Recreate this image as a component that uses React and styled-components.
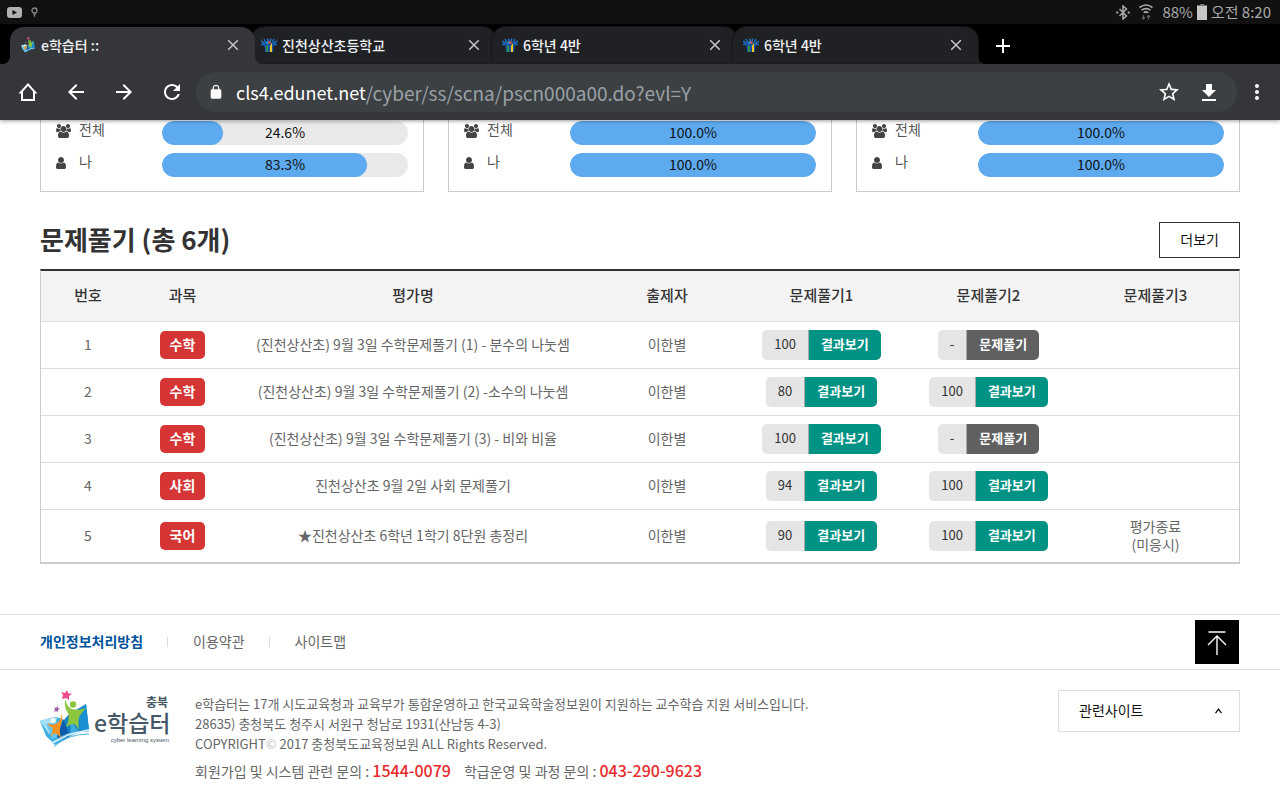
import React from "react";
import styled, { createGlobalStyle, css } from "styled-components";

const GlobalStyle = createGlobalStyle`
  *, *::before, *::after { box-sizing: border-box; }
  body {
    margin: 0;
    background: #fff;
    color: #666;
    font: 400 14px/20px "Noto Sans CJK KR", "Noto Sans", sans-serif;
  }
  button, input, select { font: inherit; color: inherit; margin: 0; padding: 0; border: 0; background: none; }
  button { cursor: pointer; }
  a { color: inherit; text-decoration: none; }
  h1, h2, p, ul { margin: 0; padding: 0; }
  ul { list-style: none; }
  svg { display: block; flex: none; }
`;

/* ---------- device and browser chrome ---------- */

const StatusBar = styled.div`
  display: flex;
  align-items: center;
  justify-content: space-between;
  height: 24px;
  padding: 0 9px 0 7px;
  background: #111;
  color: #aaa;
  font-size: 15px;
`;

const StatusGroup = styled.div`
  display: flex;
  align-items: center;
  gap: ${(p) => p.$gap}px;
`;

const TabStrip = styled.div`
  display: flex;
  align-items: flex-end;
  height: 40px;
  padding-left: 10px;
  background: #000;
  overflow: hidden;
`;

const Tab = styled.div`
  --tab: ${(p) => (p.$active ? "#35363a" : "#202124")};
  position: relative;
  z-index: ${(p) => (p.$active ? 1 : 0)};
  display: flex;
  align-items: center;
  flex: 0 1 245px;
  min-width: 0;
  height: 37px;
  margin-right: -4px;
  padding: 0 16px 2px 10px;
  gap: 5px;
  border-radius: 14px 14px 0 0;
  background: var(--tab);
  color: #f1f3f4;
  box-shadow: 0 0 1px 1px ${(p) => (p.$active ? "transparent" : "#151618")};

  &::before, &::after {
    content: "";
    position: absolute;
    bottom: 0;
    width: 8px;
    height: 8px;
  }
  &::before {
    right: 100%;
    background: radial-gradient(circle at 0 0, transparent 8px, var(--tab) 8px);
  }
  &::after {
    left: 100%;
    background: radial-gradient(circle at 100% 0, transparent 8px, var(--tab) 8px);
  }
`;

const TabTitle = styled.span`
  flex: 1;
  overflow: hidden;
  white-space: nowrap;
  font-size: 14px;
  font-weight: 500;
`;

const IconButton = styled.button`
  display: flex;
  align-items: center;
  justify-content: center;
  flex: none;
  width: ${(p) => p.$size || 24}px;
  height: ${(p) => p.$size || 24}px;
  color: ${(p) => p.$color || "#fff"};
`;

const NewTab = styled(IconButton)`
  margin: 0 0 6px 17px;
`;

const Toolbar = styled.div`
  position: relative;
  display: flex;
  align-items: center;
  height: 56px;
  padding: 0 11px 0 16px;
  background: #35363a;
  box-shadow: 0 1px 4px rgba(0, 0, 0, 0.4);
`;

const NavButtons = styled.div`
  display: flex;
  gap: 24px;
  margin-right: 12px;
`;

const AddressBar = styled.label`
  display: flex;
  align-items: center;
  flex: 1;
  min-width: 0;
  height: 40px;
  margin-right: 8px;
  padding: 0 16px 0 12px;
  border-radius: 20px;
  background: #3c4043;
  font-size: 18px;
  color: #fff;
`;

const LockSlot = styled.span`
  margin-right: 12px;
`;

const AddressInput = styled.input`
  flex: 1;
  min-width: 0;
  height: 30px;
  color: #9aa0a6;
  font-size: 19px;
  line-height: 20px;
  outline: none;
`;

const AddressActions = styled.span`
  display: flex;
  gap: 16px;
`;

/* ---------- progress cards ---------- */

const Container = styled.div`
  margin: 0 40px;
`;

const Cards = styled.div`
  display: grid;
  grid-template-columns: repeat(3, 1fr);
  gap: 24px;
`;

const Card = styled.section`
  display: grid;
  gap: 8px;
  padding: 1px 15px 14px;
  border: 1px solid #ccc;
  border-top: 0;
`;

const StatRow = styled.div`
  display: grid;
  grid-template-columns: 106px 1fr;
  height: 24px;
`;

const StatLabel = styled.span`
  display: flex;
  align-items: center;
  height: 16px;
  color: #555;
`;

const StatIcon = styled.span`
  width: 23px;
  padding-top: 4px;
  color: #444;
`;

const Track = styled.div`
  display: grid;
  border-radius: 12px;
  background: #e9e9e9;
  overflow: hidden;
  > * { grid-area: 1 / 1; }
`;

const Fill = styled.span`
  border-radius: 12px;
  background: #5daaef;
`;

const TrackValue = styled.span`
  z-index: 1;
  color: #111;
  line-height: 23px;
  text-align: center;
`;

/* ---------- exam table ---------- */

const SectionHead = styled.div`
  display: flex;
  align-items: flex-start;
  justify-content: space-between;
  margin: 30px 0 11px;
`;

const SectionTitle = styled.h1`
  color: #333;
  font-size: 26px;
  font-weight: 700;
  line-height: 34px;
`;

const MoreButton = styled.button`
  height: 36px;
  padding: 0 20px 2px;
  border: 1px solid #333;
  color: #111;
`;

const ExamTable = styled.table`
  width: 100%;
  table-layout: fixed;
  border-collapse: separate;
  border-spacing: 0;
  border: 1px solid #ccc;
  border-top: 2px solid #333;
  line-height: 18px;
  text-align: center;
`;

const Col = styled.col`
  width: ${(p) => (p.$w ? `${p.$w}px` : "auto")};
`;

const Th = styled.th`
  height: 51px;
  padding: 0 0 2px;
  border-bottom: 1px solid #ddd;
  background: #f3f3f3;
  color: #333;
  font-size: 15px;
  font-weight: 500;
`;

const Td = styled.td`
  padding: 8px 0;
  border-bottom: 1px solid #ddd;
  tr:last-child > & { border-bottom-color: #ccc; }
`;

const TextTd = styled(Td)`
  padding: 7px 0 9px;
`;

const Subject = styled.span`
  display: inline-block;
  height: 28px;
  padding: 0 10px;
  border-radius: 5px;
  background: #d53535;
  color: #fff;
  font-weight: 700;
  line-height: 26px;
  vertical-align: middle;
`;

const Attempt = styled.span`
  display: inline-flex;
  height: 30px;
  border-radius: 5px;
  overflow: hidden;
  vertical-align: middle;
  font-size: 13px;
  line-height: 28px;
`;

const Score = styled.span`
  padding: 0 12px;
  border-right: 1px solid #aaa;
  background: #e5e5e5;
  color: #333;
`;

const AttemptButton = styled.button`
  padding: 0 12px 2px;
  background: ${(p) => (p.$done ? "#009284" : "#606060")};
  color: #fff;
  font-weight: 700;
  line-height: 28px;
`;

/* ---------- footer ---------- */

const Footer = styled.footer`
  margin-top: 50px;
  border-top: 1px solid #e2e2e2;
`;

const FooterNav = styled.nav`
  border-bottom: 1px solid #e2e2e2;
`;

const FooterNavInner = styled(Container)`
  display: flex;
  align-items: center;
  justify-content: space-between;
  height: 54px;
  padding-right: 1px;
`;

const Links = styled.ul`
  display: flex;
  align-items: center;
  padding-bottom: 2px;
`;

const LinkItem = styled.li`
  display: flex;
  align-items: center;
  & + &::before {
    content: "";
    width: 1px;
    height: 10px;
    margin: 2px 25px 0 24px;
    background: #ddd;
  }
`;

const FooterLink = styled.a`
  ${(p) => p.$strong && css`
    color: #00539b;
    font-weight: 700;
  `}
`;

const TopButton = styled(IconButton)`
  padding-top: 2px;
  background: #000;
`;

const FooterBody = styled(Container)`
  display: flex;
  align-items: flex-start;
  padding-top: 20px;
`;

const LogoLink = styled.a`
  width: 155px;
`;

const Address = styled.div`
  flex: 1;
  padding-top: 4px;
  font-size: 13px;
`;

const Mark = styled.span`
  color: #bbb;
`;

const Contacts = styled.p`
  display: flex;
  gap: 13px;
  margin-top: 6px;
  font-size: 14px;
`;

const Phone = styled.a`
  color: #e72b2b;
  font-size: 16px;
  font-weight: 500;
`;

const SiteSelect = styled.label`
  display: grid;
  align-items: center;
  width: 182px;
  height: 42px;
  border: 1px solid #ddd;
  color: #111;
  > * { grid-area: 1 / 1; }
  svg { justify-self: end; margin-right: 17px; pointer-events: none; }
  select {
    width: 100%;
    height: 40px;
    padding: 0 20px 2px;
    appearance: none;
  }
`;

/* ---------- drawings ---------- */

const Glyph = ({ d, size = 24, box = "0 0 24 24", width, ...rest }) => (
  <svg width={width || size} height={size} viewBox={box} fill="currentColor" aria-hidden="true" {...rest}>
    <path d={d} />
  </svg>
);

const line = { fill: "none", stroke: "currentColor" };

const D = {
  back: "M20 11H7.83l5.59-5.59L12 4l-8 8 8 8 1.41-1.41L7.83 13H20v-2z",
  forward: "M12 4l-1.41 1.41L16.17 11H4v2h12.17l-5.58 5.59L12 20l8-8z",
  reload:
    "M17.65 6.35C16.2 4.9 14.21 4 12 4c-4.42 0-7.99 3.58-7.99 8s3.57 8 7.99 8c3.73 0 6.84-2.55 7.73-6h-2.08c-.82 2.33-3.04 4-5.65 4-3.31 0-6-2.69-6-6s2.69-6 6-6c1.66 0 3.14.69 4.22 1.78L13 11h7V4l-2.35 2.35z",
  lock:
    "M18 8h-1V6c0-2.76-2.24-5-5-5S7 3.24 7 6v2H6c-1.1 0-2 .9-2 2v10c0 1.1.9 2 2 2h12c1.1 0 2-.9 2-2V10c0-1.1-.9-2-2-2zM8.9 8V6c0-1.71 1.39-3.1 3.1-3.1s3.1 1.39 3.1 3.1v2z",
  star:
    "M22 9.24l-7.19-.62L12 2 9.19 8.63 2 9.24l5.46 4.73L5.82 21 12 17.27 18.18 21l-1.63-7.03L22 9.24zM12 15.4l-3.76 2.27 1-4.28-3.32-2.88 4.38-.38L12 6.1l1.71 4.04 4.38.38-3.32 2.88 1 4.28L12 15.4z",
  download: "M19 10h-4V4H9v6H5l7 7 7-7zM5 19v2h14v-2H5z",
  menu:
    "M12 8c1.1 0 2-.9 2-2s-.9-2-2-2-2 .9-2 2 .9 2 2 2zm0 2c-1.1 0-2 .9-2 2s.9 2 2 2 2-.9 2-2-.9-2-2-2zm0 6c-1.1 0-2 .9-2 2s.9 2 2 2 2-.9 2-2-.9-2-2-2z",
  users:
    "M593 896q-162 5-265 128H194q-82 0-138-40.500T0 865q0-353 124-353 6 0 43.500 21t97.500 42.500T384 597q67 0 133-23-5 37-5 66 0 139 81 256zm1071 637q0 120-73 189.500t-194 69.500H523q-121 0-194-69.500T256 1533q0-53 3.500-103.500t14-109T300 1212t43-97.500 62-81 85.500-53.500T602 960q10 0 43 21.500t73 48 107 48 135 21.500 135-21.500 107-48 73-48 43-21.500q61 0 111.500 20t85.500 53.500 62 81 43 97.500 26.500 108.500 14 109 3.500 103.500zM640 256q0 106-75 181t-181 75-181-75-75-181 75-181T384 0t181 75 75 181zm704 384q0 159-112.500 271.500T960 1024 688.500 911.500 576 640t112.500-271.500T960 256t271.500 112.500T1344 640zm576 225q0 78-56 118.500t-138 40.500h-134q-103-123-265-128 81-117 81-256 0-29-5-66 66 23 133 23 59 0 119-21.500t97.500-42.500 43.500-21q124 0 124 353zm-128-609q0 106-75 181t-181 75-181-75-75-181 75-181 181-75 181 75 75 181z",
  user:
    "M1280 1399q0 109-62.500 187t-150.500 78H213q-88 0-150.500-78T0 1399q0-85 8.500-160.500t31.500-152 58.500-131 94-89T327 832q131 128 313 128t313-128q76 0 134.500 34.500t94 89 58.500 131 31.500 152 8.500 160.500zM1024 512q0 159-112.500 271.500T640 896 368.500 783.500 256 512t112.500-271.500T640 128t271.500 112.500T1024 512z",
};

const VideoIcon = () => (
  <svg width="15" height="11" viewBox="0 0 15 11" aria-hidden="true">
    <rect width="15" height="11" rx="3" fill="#b0b0b0" />
    <path d="M5.500 3v5l4.500-2.500z" fill="#111" />
  </svg>
);

const PinIcon = () => (
  <svg width="7" height="11" viewBox="0 0 7 11" aria-hidden="true">
    <circle cx="3.500" cy="3.500" r="2.500" fill="none" stroke="#888" strokeWidth="1.300" />
    <path d="M2 6l1.500 5L5 6z" fill="#777" />
  </svg>
);

const BluetoothIcon = () => (
  <svg width="14" height="15" viewBox="0 0 14 15" {...line} strokeWidth="1.500" aria-hidden="true">
    <path d="M3.500 4l7 7L7 14V1l3.500 3-7 7" />
    <path d="M.3 7.500h2M11.700 7.500h2" strokeWidth="2" />
  </svg>
);

const WifiIcon = () => (
  <svg width="14" height="16" viewBox="0 0 14 16" {...line} strokeWidth="1.600" aria-hidden="true">
    <path d="M.5 3.500Q7-1.500 13.500 3.500M2.500 6.200Q7 3 11.500 6.200M4.700 8.700Q7 7 9.300 8.700" />
    <path d="M4.500 11v4M3 13.500l1.500 1.500L6 13.500M9.500 15.500v-4M8 13l1.500-1.500L11 13" stroke="#666" strokeWidth="1.100" />
  </svg>
);

const BatteryIcon = () => (
  <svg width="10" height="16" viewBox="0 0 10 16" aria-hidden="true">
    <path d="M3 0h4v1h3v15H0V1h3z" fill="#c6c6c6" />
    <path d="M0 1h3V0h4v1h3v1H0z" fill="#777" />
  </svg>
);

const HomeIcon = () => (
  <svg width="24" height="24" viewBox="0 0 24 24" {...line} strokeWidth="2" aria-hidden="true">
    <path d="M4.800 12.500L12 4.400l7.200 8.100H18V20H6v-7.500z" />
  </svg>
);

const CrossIcon = () => (
  <svg width="12" height="12" viewBox="0 0 12 12" {...line} strokeWidth="1.500" aria-hidden="true">
    <path d="M1.200 1.200l9.600 9.600M10.800 1.200l-9.600 9.600" />
  </svg>
);

const PlusIcon = () => (
  <svg width="14" height="14" viewBox="0 0 14 14" {...line} strokeWidth="2" aria-hidden="true">
    <path d="M7 0v14M0 7h14" />
  </svg>
);

const UpIcon = () => (
  <svg width="20" height="26" viewBox="0 0 20 26" {...line} strokeWidth="1.400" aria-hidden="true">
    <path d="M1.500 2h17M10 6v19M1 15l9-9 9 9" />
  </svg>
);

const BookArt = () => (
  <g>
    <path d="M0 31l10-3q9-2 14 2l6 17-15 8L6 46z" fill="#3fb0e4" />
    <path d="M0 31l10-3q4-1 7 0l-3 12-5 4z" fill="#a5e0f7" />
    <path d="M6 34l6 15 8-3 1-14z" fill="#6cc6ec" />
    <path d="M24 30q6-8 12-10l10-6 3 26-13 3-20 9 4-8z" fill="#1583c8" />
    <path d="M23 29l7 17-10 4-3-3z" fill="#0c5ba6" />
    <path d="M38 20l8-6 3 26-8 2z" fill="#1a8fd2" />
    <path d="M30 30l9 12-8 4z" fill="#3eaade" />
    <path d="M12 53q15-13 37-12M14 56.500q15-13 35-12.500" fill="none" stroke="#4fb3e2" strokeWidth="1" />
    <path d="M8 48l4 4 16-8 21-5v1.500l-20 5-16 8z" fill="#d6f1fb" />
    <path d="M8 33q4 3 8 1 5-3 6-11 1 8-2 14-1 5 1 11-3-4-6-5-2 1-5 4 4-6 2-10-3 0-4-4z" fill="#f7921e" />
    <circle cx="13" cy="30.500" r="2.600" fill="#f4fbfe" />
    <path d="M25 9q2 8 7 10 7 2 14-1-4 4-7 9-1 5 0 13-3-6-6-6-2 0-7 3 4-8 2-14-4-5-3-14z" fill="#8cc63e" />
    <circle cx="33" cy="14.500" r="3.200" fill="#8cc63e" />
    <path d="M27 0l1 3 4 1-3 2v4l-3-2-4 1 1-4-2-3 4 1z" fill="#ef4c8f" />
    <path d="M18 16v2l2 1-2 1v2l-2-1-2 1 1-3-1-2 2 1z" fill="#a15fb0" />
  </g>
);

const Logo = () => (
  <svg width="130" height="60" viewBox="0 0 130 60" role="img" aria-label="충북 e학습터">
    <BookArt />
    <g fill="#465866" fontFamily='"Noto Sans CJK KR", sans-serif'>
      <text x="106" y="17" fontSize="12" fontWeight="700">충북</text>
      <text x="54" y="42" fontSize="23" fontWeight="500">e학습터</text>
      <text x="129" y="52" textAnchor="end" fontSize="6" fontFamily='"Liberation Sans", sans-serif'>cyber learning system</text>
    </g>
  </svg>
);

const BookFavicon = () => (
  <svg width="16" height="16" viewBox="0 0 50 58" aria-hidden="true"><BookArt /></svg>
);

const SchoolFavicon = () => (
  <svg width="16" height="16" viewBox="0 0 16 16" aria-hidden="true">
    <path d="M0 4l4 3M16 4l-4 3M0 7.500h4M16 7.500h-4M3 2l2 4M13 2l-2 4M6.500 1.500l1 3M10 1.500l-1 3" stroke="#1f6dbb" strokeWidth="1.600" fill="none" />
    <path d="M3 5h10l-1 10H4z" fill="#17539c" />
    <path d="M5 8l2 1v6H5z" fill="#2f8f4e" />
    <path d="M9 9l2-3v9H9z" fill="#f7c623" />
    <circle cx="6.500" cy="5.500" r="1.500" fill="#3a8ad6" />
    <circle cx="8.500" cy="5.500" r="1.200" fill="#e8533a" />
  </svg>
);

/* ---------- data ---------- */

const tabs = [
  { title: "e학습터 ::", icon: BookFavicon, active: true },
  { title: "진천상산초등학교", icon: SchoolFavicon },
  { title: "6학년 4반", icon: SchoolFavicon },
  { title: "6학년 4반", icon: SchoolFavicon },
];

const cards = [[24.6, 83.3], [100, 100], [100, 100]];

const heads = ["번호", "과목", "평가명", "출제자", "문제풀기1", "문제풀기2", "문제풀기3"];
const columnWidths = [94, 95, null, 142, 167, 167, 167];

const exams = [
  { subject: "수학", title: "(진천상산초) 9월 3일 수학문제풀기 (1) - 분수의 나눗셈", scores: ["100", "-"] },
  { subject: "수학", title: "(진천상산초) 9월 3일 수학문제풀기 (2) -소수의 나눗셈", scores: ["80", "100"] },
  { subject: "수학", title: "(진천상산초) 9월 3일 수학문제풀기 (3) - 비와 비율", scores: ["100", "-"] },
  { subject: "사회", title: "진천상산초 9월 2일 사회 문제풀기", scores: ["94", "100"] },
  { subject: "국어", title: "★진천상산초 6학년 1학기 8단원 총정리", scores: ["90", "100"], closed: true },
];

/* ---------- page ---------- */

const Stat = ({ icon, label, value }) => (
  <StatRow>
    <StatLabel>
      <StatIcon>{icon}</StatIcon>
      {label}
    </StatLabel>
    <Track>
      <Fill style={{ width: `${value}%` }} />
      <TrackValue>{value.toFixed(1)}%</TrackValue>
    </Track>
  </StatRow>
);

const AttemptPill = ({ score }) => (
  <Attempt>
    <Score>{score}</Score>
    <AttemptButton $done={score !== "-"}>{score === "-" ? "문제풀기" : "결과보기"}</AttemptButton>
  </Attempt>
);

const Browser = () => (
  <header>
    <StatusBar>
      <StatusGroup $gap={9}>
        <VideoIcon />
        <PinIcon />
      </StatusGroup>
      <StatusGroup $gap={9}>
        <BluetoothIcon />
        <WifiIcon />
        <StatusGroup $gap={4}>
          <span>88%</span>
          <BatteryIcon />
          <span>오전 8:20</span>
        </StatusGroup>
      </StatusGroup>
    </StatusBar>
    <TabStrip>
      {tabs.map(({ title, icon: Icon, active }, i) => (
        <Tab key={i} $active={active}>
          <Icon />
          <TabTitle>{title}</TabTitle>
          <IconButton $size={12} $color="#c4c7c9" aria-label="탭 닫기"><CrossIcon /></IconButton>
        </Tab>
      ))}
      <NewTab aria-label="새 탭"><PlusIcon /></NewTab>
    </TabStrip>
    <Toolbar>
      <NavButtons>
        <IconButton aria-label="홈"><HomeIcon /></IconButton>
        <IconButton aria-label="뒤로"><Glyph d={D.back} /></IconButton>
        <IconButton aria-label="앞으로"><Glyph d={D.forward} /></IconButton>
        <IconButton aria-label="새로고침"><Glyph d={D.reload} /></IconButton>
      </NavButtons>
      <AddressBar>
        <LockSlot><Glyph d={D.lock} size={16} /></LockSlot>
        <span>cls4.edunet.net</span>
        <AddressInput aria-label="주소" defaultValue="/cyber/ss/scna/pscn000a00.do?evl=Y" />
        <AddressActions>
          <IconButton aria-label="북마크"><Glyph d={D.star} /></IconButton>
          <IconButton aria-label="다운로드"><Glyph d={D.download} /></IconButton>
        </AddressActions>
      </AddressBar>
      <IconButton aria-label="메뉴"><Glyph d={D.menu} /></IconButton>
    </Toolbar>
  </header>
);

export default function App() {
  return (
    <>
      <GlobalStyle />
      <Browser />
      <main>
        <Container>
          <Cards>
            {cards.map(([all, me], i) => (
              <Card key={i}>
                <Stat icon={<Glyph d={D.users} box="0 0 1920 1792" size={14} width={15} />} label="전체" value={all} />
                <Stat icon={<Glyph d={D.user} box="0 0 1280 1792" size={14} width={10} />} label="나" value={me} />
              </Card>
            ))}
          </Cards>
          <SectionHead>
            <SectionTitle>문제풀기 (총 6개)</SectionTitle>
            <MoreButton>더보기</MoreButton>
          </SectionHead>
          <ExamTable>
            <colgroup>
              {columnWidths.map((w, i) => <Col key={i} $w={w} />)}
            </colgroup>
            <thead>
              <tr>{heads.map((h) => <Th key={h} scope="col">{h}</Th>)}</tr>
            </thead>
            <tbody>
              {exams.map((exam, i) => (
                <tr key={i}>
                  <TextTd>{i + 1}</TextTd>
                  <Td><Subject>{exam.subject}</Subject></Td>
                  <TextTd>{exam.title}</TextTd>
                  <TextTd>이한별</TextTd>
                  <Td><AttemptPill score={exam.scores[0]} /></Td>
                  <Td><AttemptPill score={exam.scores[1]} /></Td>
                  <TextTd>{exam.closed && <>평가종료<br />(미응시)</>}</TextTd>
                </tr>
              ))}
            </tbody>
          </ExamTable>
        </Container>
      </main>
      <Footer>
        <FooterNav>
          <FooterNavInner>
            <Links>
              <LinkItem><FooterLink href="#privacy" $strong>개인정보처리방침</FooterLink></LinkItem>
              <LinkItem><FooterLink href="#terms">이용약관</FooterLink></LinkItem>
              <LinkItem><FooterLink href="#sitemap">사이트맵</FooterLink></LinkItem>
            </Links>
            <TopButton $size={44} aria-label="맨 위로"><UpIcon /></TopButton>
          </FooterNavInner>
        </FooterNav>
        <FooterBody>
          <LogoLink href="#home"><Logo /></LogoLink>
          <Address>
            <p>e학습터는 17개 시도교육청과 교육부가 통합운영하고 한국교육학술정보원이 지원하는 교수학습 지원 서비스입니다.</p>
            <p>28635) 충청북도 청주시 서원구 청남로 1931(산남동 4-3)</p>
            <p>COPYRIGHT<Mark>©</Mark> 2017 충청북도교육정보원 ALL Rights Reserved.</p>
            <Contacts>
              <span>회원가입 및 시스템 관련 문의 : <Phone href="tel:1544-0079">1544-0079</Phone></span>
              <span>학급운영 및 과정 문의 : <Phone href="tel:043-290-9623">043-290-9623</Phone></span>
            </Contacts>
          </Address>
          <SiteSelect>
            <select aria-label="관련사이트" defaultValue="">
              <option value="">관련사이트</option>
            </select>
            <svg width="7" height="6" viewBox="0 0 7 6" {...line} strokeWidth="1.400" aria-hidden="true">
              <path d="M.5 5.200l3-4 3 4" />
            </svg>
          </SiteSelect>
        </FooterBody>
      </Footer>
    </>
  );
}
